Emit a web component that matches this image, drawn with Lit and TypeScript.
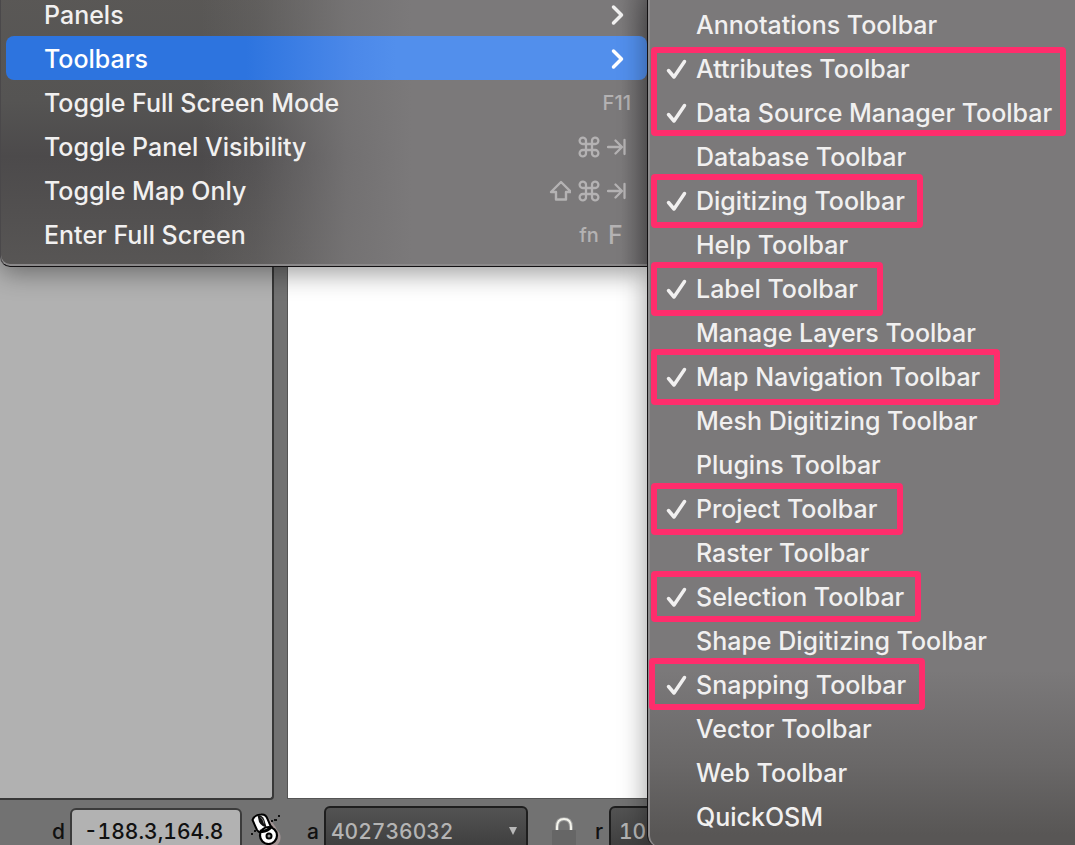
import { LitElement, html, css, svg, nothing } from "lit";
import { customElement, property } from "lit/decorators.js";

type Key = "shift" | "cmd" | "tab" | "fn" | "F" | "F11";

interface ViewItem {
  label: string;
  submenu?: boolean;
  active?: boolean;
  keys?: Key[];
}

const viewItems: ViewItem[] = [
  { label: "Panels", submenu: true },
  { label: "Toolbars", submenu: true, active: true },
  { label: "Toggle Full Screen Mode", keys: ["F11"] },
  { label: "Toggle Panel Visibility", keys: ["cmd", "tab"] },
  { label: "Toggle Map Only", keys: ["shift", "cmd", "tab"] },
  { label: "Enter Full Screen", keys: ["fn", "F"] },
];

const toolbars: [string, boolean][] = [
  ["Annotations Toolbar", false],
  ["Attributes Toolbar", true],
  ["Data Source Manager Toolbar", true],
  ["Database Toolbar", false],
  ["Digitizing Toolbar", true],
  ["Help Toolbar", false],
  ["Label Toolbar", true],
  ["Manage Layers Toolbar", false],
  ["Map Navigation Toolbar", true],
  ["Mesh Digitizing Toolbar", false],
  ["Plugins Toolbar", false],
  ["Project Toolbar", true],
  ["Raster Toolbar", false],
  ["Selection Toolbar", true],
  ["Shape Digitizing Toolbar", false],
  ["Snapping Toolbar", true],
  ["Vector Toolbar", false],
  ["Web Toolbar", false],
  ["QuickOSM", false],
];

// Hand-drawn marker frames over the enabled toolbars: x, y, width, height.
const frames = [
  [6, 50, 409, 83],
  [6, 177, 266, 48],
  [6, 265, 226, 48],
  [6, 352, 343, 50],
  [6, 486, 246, 46],
  [6, 574, 264, 45],
  [4, 661, 270, 46],
];

const menuStyles = css`
  * {
    box-sizing: border-box;
  }
  .row {
    display: flex;
    align-items: center;
    width: 100%;
    height: 44px;
    margin: 0;
    border: 0;
    background: none;
    color: #f1f0f0;
    font: 500 25px/44px Inter, "Liberation Sans", sans-serif;
    text-align: left;
    white-space: nowrap;
  }
  svg {
    display: block;
    flex: none;
    fill: none;
    stroke: currentColor;
    stroke-linecap: round;
    stroke-linejoin: round;
  }
`;

@customElement("view-menu")
export class ViewMenu extends LitElement {
  static styles = [
    menuStyles,
    css`
      :host {
        display: block;
      }
      .menu {
        overflow: hidden;
        padding: 0 0 10px;
        border-bottom: 1px solid #121012;
        border-left: 1px solid #4a484a;
        border-bottom-left-radius: 10px;
        background:
          linear-gradient(to left, rgba(70, 68, 70, 0.4), transparent 26px),
          linear-gradient(
            to right,
            rgba(123, 121, 122, 0) 200px,
            rgba(123, 121, 122, 0.2) 255px,
            rgba(123, 121, 122, 0.8) 345px,
            #7b797a 410px
          ),
          linear-gradient(#5a5856, #555453 40%, #4c4a4b 60%, #585655);
        box-shadow:
          inset 0 -2px 0 #8b898a,
          0 6px 26px rgba(0, 0, 0, 0.4);
      }
      .row {
        justify-content: space-between;
        padding: 2px 16px 0 38px;
      }
      .item {
        padding-left: 5px;
      }
      .active {
        border-radius: 8px;
        background: linear-gradient(to right, #2d74df 240px, #4b88e9 345px, #528fec 390px);
        color: #fff;
      }
      .keys {
        display: flex;
        align-items: center;
        gap: 6px;
        color: #b4b2b3;
        font-size: 20px;
      }
      .letter {
        width: 24px;
        padding-left: 1px;
        font-size: 25px;
      }
      .fn {
        width: 24px;
        text-align: center;
      }
    `,
  ];

  private key(key: Key) {
    switch (key) {
      case "shift":
        return html`<svg width="24" height="24" viewBox="0 0 24 24" stroke-width="2.400">
          <path d="M14 3 24 13H19V20.500H9V13H4Z" />
        </svg>`;
      case "cmd":
        return html`<svg width="24" height="24" viewBox="0 0 24 24" stroke-width="2.300">
          <path
            d="M9 6.200V17.800A3.200 3.200 0 1 1 5.800 15H18.200A3.200 3.200 0 1 1 15 17.800V6.200A3.200 3.200 0 1 1 18.200 9H5.800A3.200 3.200 0 1 1 9 6.200Z"
          />
        </svg>`;
      case "tab":
        return html`<svg width="24" height="24" viewBox="0 0 24 24" stroke-width="2.300">
          <path d="M1 12H14M8.500 5.500 15 12 8.500 18.500M17.500 5V19" />
        </svg>`;
      case "fn":
        return html`<span class="fn">fn</span>`;
      case "F":
        return html`<span class="letter">F</span>`;
      default:
        return html`<span>${key}</span>`;
    }
  }

  render() {
    return html`<div class="menu" role="menu" aria-label="View">
      ${viewItems.map(
        (item) => html`<div class="item">
          <button class="row ${item.active ? "active" : ""}" role="menuitem">
            <span>${item.label}</span>
            ${item.submenu
              ? html`<svg width="24" height="24" viewBox="0 0 24 24" stroke-width="3.500">
                  <path d="M6.500 4 14.500 12 6.500 20" />
                </svg>`
              : nothing}
            ${item.keys
              ? html`<span class="keys">${item.keys.map((k) => this.key(k))}</span>`
              : nothing}
          </button>
        </div>`,
      )}
    </div>`;
  }
}

@customElement("toolbar-menu")
export class ToolbarMenu extends LitElement {
  static styles = [
    menuStyles,
    css`
      :host {
        display: block;
      }
      .menu {
        position: relative;
        padding: 3px 0 8px;
        border-left: 1px solid #121012;
        border-bottom-left-radius: 12px;
        background:
          linear-gradient(rgba(88, 86, 85, 0) 670px, rgba(88, 86, 85, 0.5) 765px, #585655 835px),
          #7b797a;
        box-shadow:
          inset 2px 0 0 #8e8c8d,
          0 0 28px rgba(0, 0, 0, 0.4);
      }
      .row {
        padding: 0 0 0 18px;
      }
      .tick {
        width: 30px;
      }
      .frames {
        position: absolute;
        inset: 0;
        width: 100%;
        height: 100%;
        stroke: #ff2d6c;
        stroke-width: 6;
        pointer-events: none;
      }
    `,
  ];

  render() {
    return html`<div class="menu" role="menu" aria-label="Toolbars">
      ${toolbars.map(
        ([label, checked]) => html`<button
          class="row"
          role="menuitemcheckbox"
          aria-checked=${checked ? "true" : "false"}
        >
          <span class="tick">
            ${checked
              ? html`<svg width="22" height="24" viewBox="0 0 22 24" stroke-width="3.500">
                  <path d="M2.500 13.500 8 20 18.500 4.500" />
                </svg>`
              : nothing}
          </span>
          <span>${label}</span>
        </button>`,
      )}
      <svg class="frames" aria-hidden="true">
        ${frames.map(
          ([x, y, w, h]) => svg`<rect x=${x} y=${y} width=${w} height=${h} rx="1"></rect>`,
        )}
      </svg>
    </div>`;
  }
}

@customElement("status-bar")
export class StatusBar extends LitElement {
  @property() coordinate = "-188.3,164.8";

  static styles = css`
    * {
      box-sizing: border-box;
    }
    :host {
      display: block;
    }
    .bar {
      display: flex;
      height: 45px;
      overflow: hidden;
      padding: 8px 0 0 52px;
      color: #111;
      font: 500 21px/48px Inter, "Liberation Sans", sans-serif;
      white-space: nowrap;
    }
    .name {
      flex: none;
      width: 14px;
    }
    .scale-name {
      margin: 0 3px 0 23px;
    }
    .coord {
      flex: none;
      width: 172px;
      height: 48px;
      margin: 0 8px 0 4px;
      padding: 0 12px;
      border: 2px solid #3b3b3b;
      border-radius: 6px;
      background: #b2b2b2;
      color: #111;
      font: inherit;
      font-variant-numeric: tabular-nums;
    }
    .mouse {
      flex: none;
      margin-top: 4px;
    }
    .combo {
      position: relative;
      flex: none;
      width: 204px;
      margin-top: -2px;
    }
    .combo select {
      display: block;
      width: 100%;
      height: 52px;
      padding: 0 0 0 5px;
      border: 2px solid #1e1e1e;
      border-radius: 6px;
      appearance: none;
      background: linear-gradient(#535353, #404040 36px);
      color: #b4b4b4;
      font: inherit;
      font-variant-numeric: tabular-nums;
    }
    .arrow {
      position: absolute;
      top: 20px;
      right: 10px;
      pointer-events: none;
    }
    .lock {
      flex: none;
      margin: 8px 18px 0 23px;
    }
    .scale select {
      padding-left: 8px;
    }
  `;

  render() {
    return html`<div class="bar">
      <label class="name" for="coord">d</label>
      <input class="coord" id="coord" .value=${this.coordinate} />
      <svg class="mouse" width="34" height="38" viewBox="0 0 34 38" aria-hidden="true">
        <path d="M17 5Q24 11 27 18Q32 22 30 29Q27 36 19 35" fill="#a39595" />
        <path
          d="M2.500 8Q4 3 11 2.500Q16 2 17.500 7L21 15Q21 20 16 22Q10 22 7 18Z"
          fill="#fff"
          stroke="#000"
          stroke-width="2"
        />
        <path d="M7.500 3Q12 3 14 7L16.500 15Q12 15 9 10Z" fill="#111" />
        <path d="M10.500 5.500Q12 6 13 8L14 11.500" fill="none" stroke="#777" stroke-width="1" />
        <circle cx="18.500" cy="23.500" r="8.500" fill="#fff" stroke="#000" stroke-width="2.200" />
        <path d="M9.500 19Q16 21 22 14" fill="none" stroke="#000" stroke-width="3" />
        <circle cx="19" cy="24" r="2.500" fill="#999" stroke="#000" stroke-width="2" />
        <path
          d="M21 8h2v2h-2zM24 7h3v2h-3zM28 3h2v2h-2zM1 21h2v2H1zM4 18h2v2H4z"
          fill="#111"
        />
      </svg>
      <label class="name scale-name" for="scale">a</label>
      <div class="combo">
        <select id="scale">
          <option>402736032</option>
        </select>
        <svg class="arrow" width="10" height="10" viewBox="0 0 10 10" aria-hidden="true">
          <path d="M1 1H9L5 9Z" fill="#b8b8b8" />
        </svg>
      </div>
      <svg class="lock" width="26" height="36" viewBox="0 0 26 36" aria-hidden="true">
        <path d="M6 15V11Q6 3 13 3T20 11V15" fill="none" stroke="#999" stroke-width="4" />
        <path d="M6 15V11Q6 3 13 3T20 11V15" fill="none" stroke="#f4f4ec" stroke-width="2" />
        <rect x="1" y="14" width="24" height="22" rx="1" fill="#666" />
      </svg>
      <label class="name" for="magnifier">r</label>
      <div class="combo scale">
        <select id="magnifier">
          <option>100%</option>
        </select>
      </div>
    </div>`;
  }
}

@customElement("app-root")
export class AppRoot extends LitElement {
  static styles = css`
    * {
      box-sizing: border-box;
    }
    :host {
      display: block;
      position: relative;
      height: 100vh;
      overflow: hidden;
      background: #727272;
    }
    .window {
      display: flex;
      flex-direction: column;
      height: 100%;
    }
    .work {
      display: flex;
      flex: 1;
      gap: 13px;
    }
    .layers {
      flex: 0 0 274px;
      border: 2px solid #383838;
      border-width: 0 2px 2px 0;
      border-bottom-right-radius: 4px;
      background: #b1b1b1;
    }
    .canvas {
      flex: 1;
      border: 1px solid #555;
      border-width: 0 0 1px 1px;
      margin-bottom: 1px;
      background: #fff;
    }
    .menus {
      display: flex;
      align-items: flex-start;
      position: absolute;
      top: 0;
      left: 0;
      right: 0;
    }
    .view {
      flex: 0 0 647px;
      margin-top: -8px;
    }
    .toolbars {
      flex: 1;
    }
  `;

  render() {
    return html`
      <div class="window">
        <main class="work">
          <section class="layers" aria-label="Layers"></section>
          <section class="canvas" aria-label="Map canvas"></section>
        </main>
        <status-bar></status-bar>
      </div>
      <nav class="menus">
        <view-menu class="view"></view-menu>
        <toolbar-menu class="toolbars"></toolbar-menu>
      </nav>
    `;
  }
}
